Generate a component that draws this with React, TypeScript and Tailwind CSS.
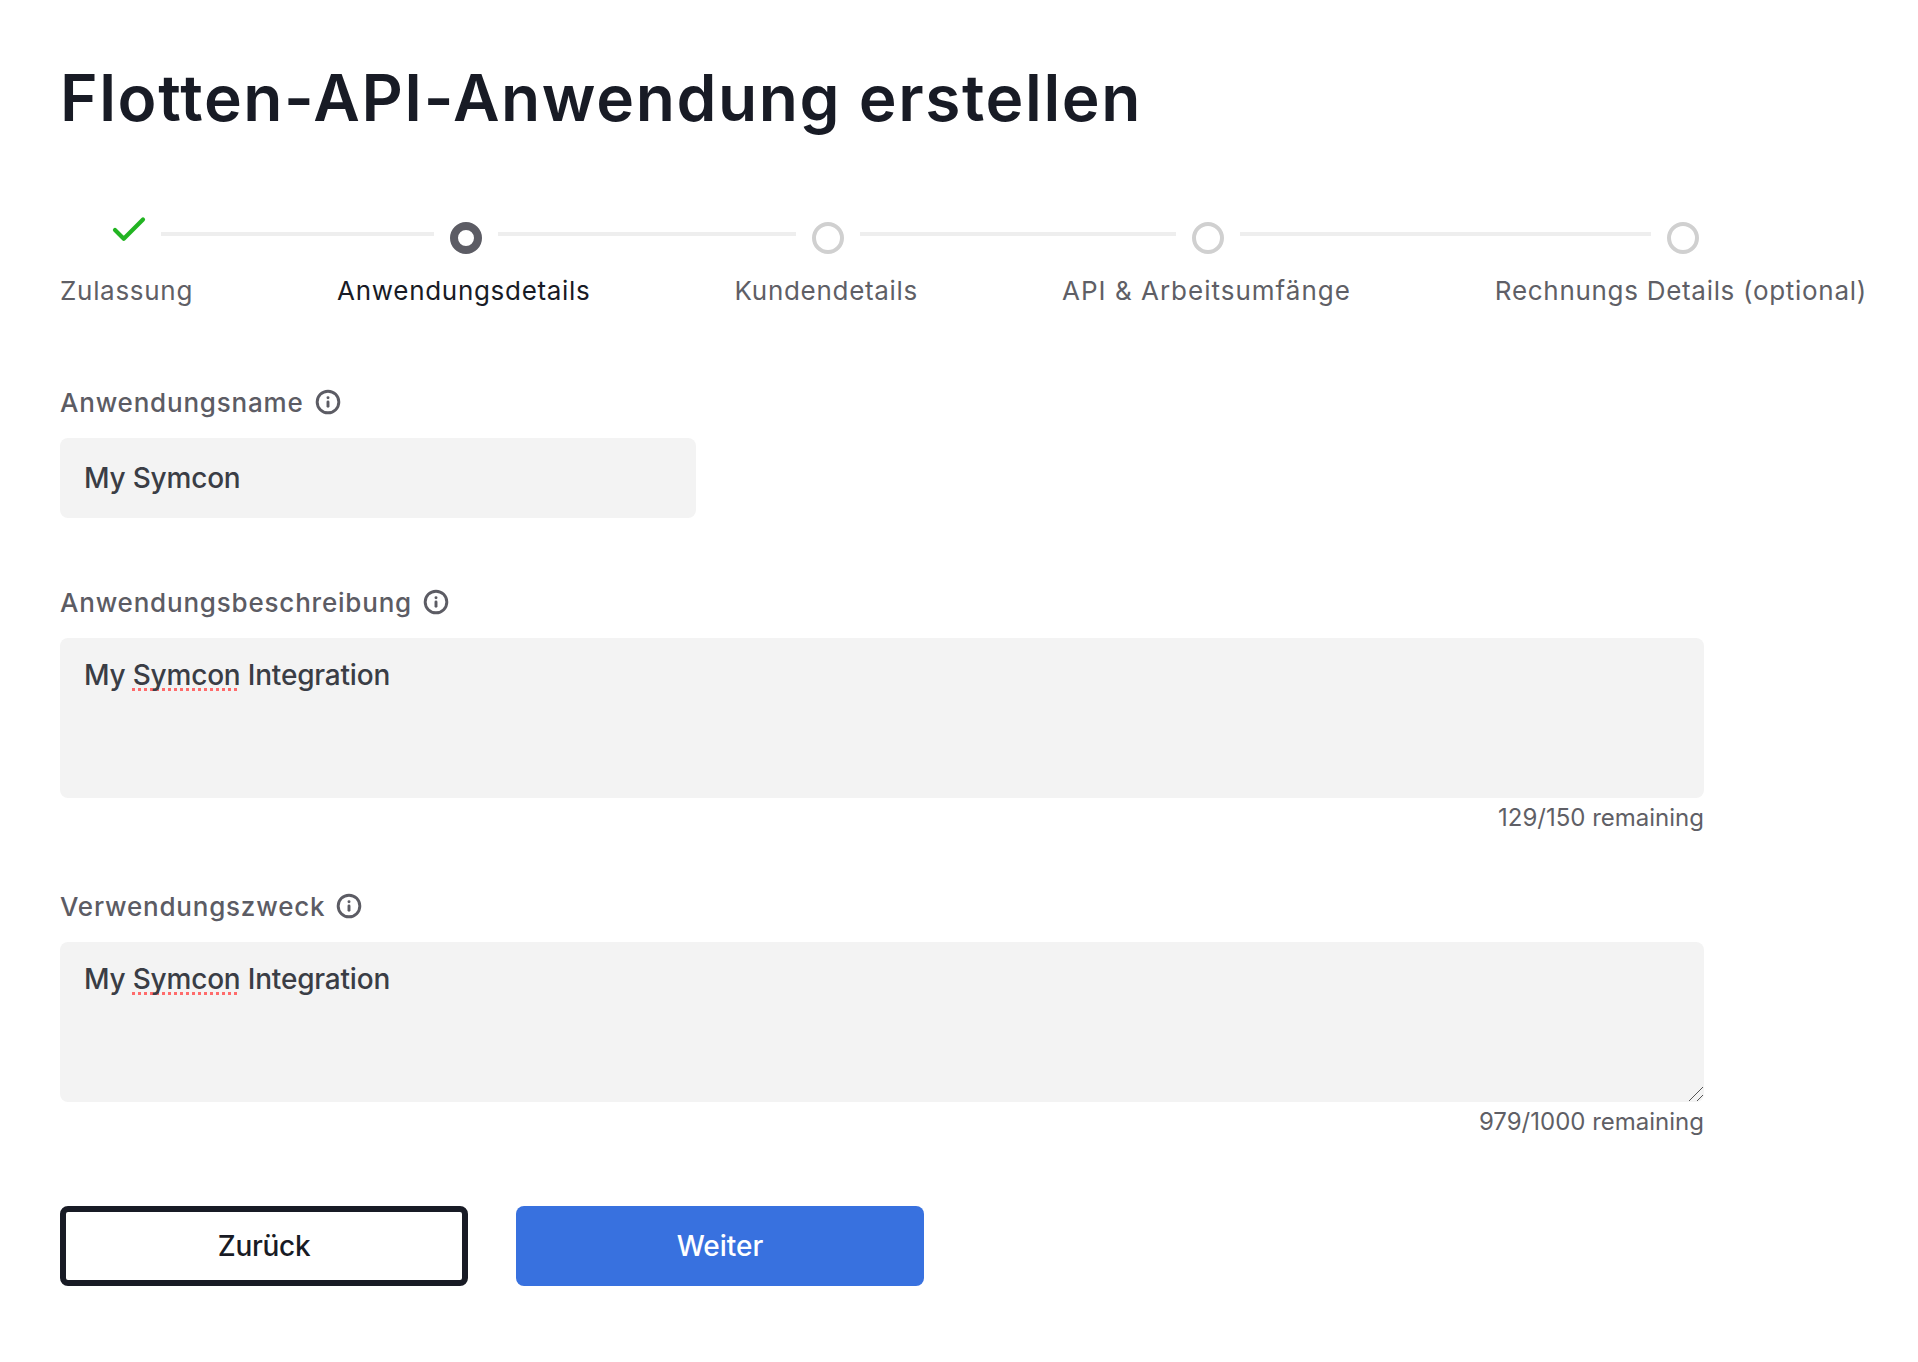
import { Check, Info } from "lucide-react";

const steps = [
  { label: "Zulassung", state: "done", line: "", track: "tracking-[0.7px]" },
  { label: "Anwendungsdetails", state: "active", line: "w-[273px]", track: "tracking-[0.7px]" },
  { label: "Kundendetails", state: "todo", line: "w-[298px]", track: "tracking-[0.7px]" },
  { label: "API & Arbeitsumfänge", state: "todo", line: "w-[316px]", track: "tracking-[1px]" },
  { label: "Rechnungs Details (optional)", state: "todo", line: "w-[411px]", track: "tracking-[0.7px]" },
];

function Step({ label, state, line, track }: { label: string; state: string; line: string; track: string }) {
  return (
    <div className="relative flex flex-col items-center">
      {line && <span className={`absolute top-[10px] right-[calc(50%+30px)] h-1 bg-[#eeeeee] ${line}`} />}
      <div className="h-8 flex items-center justify-center translate-x-[2px]">
        {state === "done" && <Check size={42} strokeWidth={2.4} className="text-[#22b422] -translate-y-[8px]" />}
        {state === "active" && <span className="w-8 h-8 rounded-full border-[8px] border-[#5c5c64] bg-white" />}
        {state === "todo" && <span className="w-8 h-8 rounded-full border-4 border-[#d0d0d0] bg-white" />}
      </div>
      <span className={`mt-[20px] text-[26px] leading-[34px] whitespace-nowrap ${track} ${state === "active" ? "text-[#181b25]" : "text-[#5f5f66]"}`}>
        {label}
      </span>
    </div>
  );
}

function Label({ children }: { children: string }) {
  return (
    <div className="flex items-center gap-[11px] h-8 text-[26px] tracking-[0.8px] font-medium text-[#5c5c64]">
      {children}
      <Info size={26} strokeWidth={2.7} />
    </div>
  );
}

function Misspelt() {
  return (
    <span className="underline decoration-dotted decoration-[3px] decoration-[#ff6b6b] underline-offset-[3px] [text-decoration-skip-ink:none]">
      Symcon
    </span>
  );
}

function Area({ count, grip }: { count: string; grip?: boolean }) {
  return (
    <div className="w-[1644px]">
      <div className="relative h-40 mt-5 rounded-lg bg-[#f3f3f3] px-6 py-[19px] text-[28px] leading-9 tracking-[-0.2px] font-medium text-[#3a3d45]">
        My <Misspelt /> Integration
        {grip && (
          <svg className="absolute right-0 bottom-0 text-[#555]" width="16" height="16" viewBox="0 0 16 16" fill="none" stroke="currentColor">
            <path d="M1 15 15 1M9 15l6-6" />
          </svg>
        )}
      </div>
      <div className="mt-2 h-6 text-right text-[24px] leading-6 text-[#5f5f66]">{count}</div>
    </div>
  );
}

export default function App() {
  return (
    <div className="min-h-[1362px] bg-white px-[60px] pt-[56px] font-['Inter',sans-serif]">
      <h1 className="text-[64px] leading-[84px] tracking-[1.6px] font-semibold text-[#181b25]">Flotten-API-Anwendung erstellen</h1>

      {/* Stepper */}
      <div className="mt-[82px] flex gap-[144px]">
        {steps.map((step) => (
          <Step key={step.label} {...step} />
        ))}
      </div>

      {/* Form */}
      <div className="mt-[78px]">
        <Label>Anwendungsname</Label>
        <div className="mt-5 w-[636px] h-20 flex items-center rounded-lg bg-[#f3f3f3] px-6 text-[28px] tracking-[-0.2px] font-medium text-[#3a3d45]">
          My Symcon
        </div>
      </div>

      <div className="mt-[68px]">
        <Label>Anwendungsbeschreibung</Label>
        <Area count="129/150 remaining" />
      </div>

      <div className="mt-[60px]">
        <Label>Verwendungszweck</Label>
        <Area count="979/1000 remaining" grip />
      </div>

      <div className="mt-[72px] flex gap-[48px]">
        <button className="w-[408px] h-20 rounded-lg border-[6px] border-[#181b25] bg-white text-[28px] tracking-[-0.3px] font-medium text-[#181b25]">Zurück</button>
        <button className="w-[408px] h-20 rounded-lg bg-[#3871df] text-[28px] font-medium text-white">Weiter</button>
      </div>
    </div>
  );
}
